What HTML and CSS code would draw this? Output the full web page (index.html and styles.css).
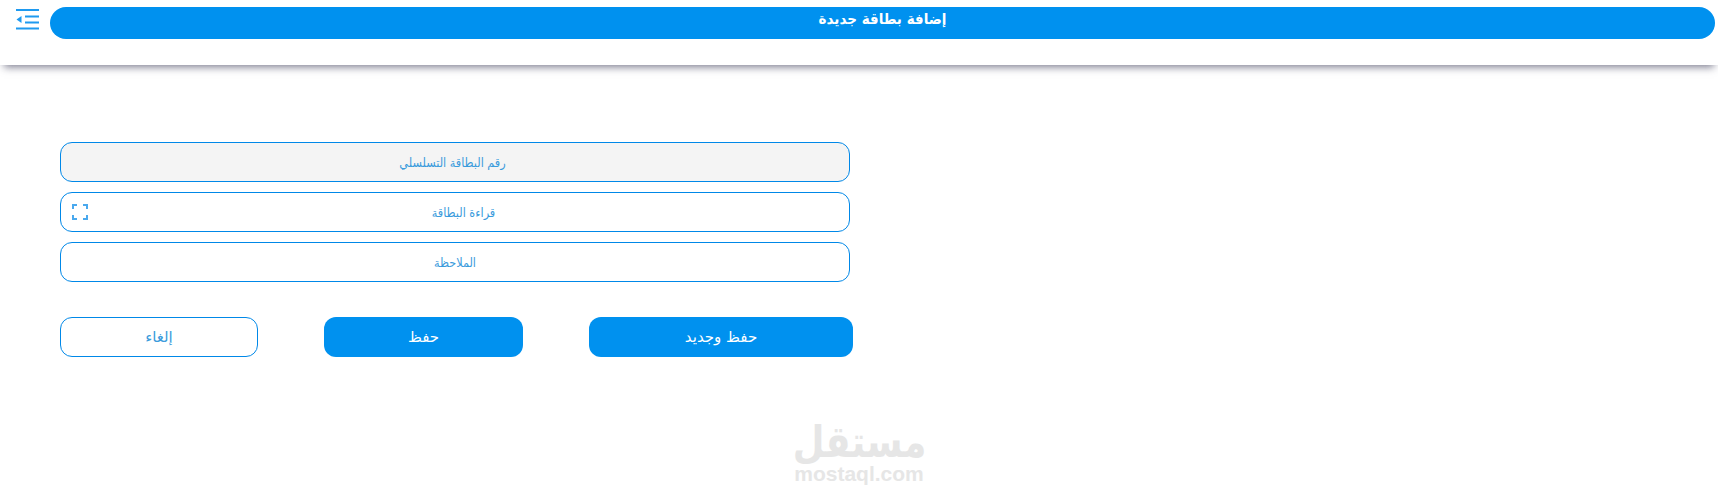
FILE: index.html
```html
<!DOCTYPE html>
<html lang="ar">
  <head>
    <meta charset="UTF-8" />
    <meta name="viewport" content="width=device-width, initial-scale=1.0" />
    <title>إضافة بطاقة جديدة</title>
    <link rel="stylesheet" href="styles.css">
  </head>
  <body>
    <header class="top-bar">
      <button class="menu-button" aria-label="menu">
        <svg width="24" height="21" viewBox="0 0 24 21">
          <path d="M0 1h23M9 7.500h14M9 13.500h14M0 19.500h23" fill="none" stroke="#1e9af0" stroke-width="2" />
          <path d="M0.500 10.500l5-3.500v7z" fill="#1e9af0" />
        </svg>
      </button>
      <h1 class="page-title" dir="rtl">إضافة بطاقة جديدة</h1>
    </header>

    <form class="card-form">
      <input class="field field-disabled" type="text" dir="rtl" placeholder="رقم البطاقة التسلسلي" />
      <div class="field-wrap">
        <input class="field field-scan" type="text" dir="rtl" placeholder="قراءة البطاقة" />
        <svg class="scan-icon" width="16" height="16" viewBox="0 0 16 16">
          <path d="M1 5V1h4M11 1h4v4M15 11v4h-4M5 15H1v-4" fill="none" stroke="#4aa9ee" stroke-width="2" />
        </svg>
      </div>
      <input class="field" type="text" dir="rtl" placeholder="الملاحظة" />

      <div class="actions">
        <button class="btn btn-outline" type="button">إلغاء</button>
        <button class="btn btn-primary btn-save" type="button">حفظ</button>
        <button class="btn btn-primary btn-save-new" type="button">حفظ وجديد</button>
      </div>
    </form>

    <footer class="watermark">
      <div class="watermark-ar" dir="rtl">مستقل</div>
      <div class="watermark-en">mostaql.com</div>
    </footer>
  </body>
</html>
```

FILE: styles.css
```css
html,
body {
  height: 496px;
  overflow: hidden;
}
body {
  margin: 0;
  background-color: #fff;
  font-family: "DejaVu Sans", sans-serif;
}
.top-bar {
  display: flex;
  align-items: flex-start;
  height: 65px;
  padding: 7px 3px 0 16px;
  box-sizing: border-box;
  background-color: #fff;
  box-shadow: 0 6px 8px -4px rgba(50, 50, 80, 0.65);
}
.menu-button {
  width: 24px;
  height: 21px;
  margin: 2px 10px 0 0;
  padding: 0;
  border: none;
  background: none;
}
.page-title {
  flex: 1;
  height: 32px;
  margin: 0;
  border-radius: 16px;
  background-color: #0091ef;
  color: #fff;
  font-family: "DejaVu Sans Condensed", "DejaVu Sans", sans-serif;
  font-size: 15px;
  font-weight: bold;
  line-height: 25px;
  text-align: center;
}
.card-form {
  display: flex;
  flex-direction: column;
  gap: 10px;
  width: 793px;
  margin: 77px 0 0 60px;
}
.field-wrap {
  position: relative;
}
.field {
  display: block;
  width: 790px;
  height: 40px;
  padding: 0;
  box-sizing: border-box;
  border: 1px solid #0088e8;
  border-radius: 12px;
  background-color: #fff;
  font-family: "DejaVu Sans Condensed", "DejaVu Sans", sans-serif;
  font-size: 12.500px;
  text-align: center;
}
.field::placeholder {
  color: #3a9bdc;
  opacity: 1;
}
.field-disabled {
  padding-right: 5px;
  background-color: #f4f4f4;
}
.field-scan {
  padding-left: 17px;
}
.scan-icon {
  position: absolute;
  left: 12px;
  top: 12px;
}
.actions {
  display: flex;
  margin-top: 25px;
}
.btn {
  height: 40px;
  padding: 0;
  box-sizing: border-box;
  border-radius: 12px;
  font-family: "DejaVu Sans", sans-serif;
  font-size: 15px;
}
.btn-outline {
  width: 198px;
  border: 1px solid #0088e8;
  background-color: #fff;
  color: #3a9bdc;
}
.btn-primary {
  border: none;
  background-color: #0091ef;
  color: #fff;
}
.btn-save {
  width: 199px;
  margin-left: 66px;
}
.btn-save-new {
  width: 264px;
  margin-left: 66px;
}
.watermark {
  display: flex;
  flex-direction: column;
  align-items: center;
  gap: 2px;
  margin-top: 65px;
  color: #e6e6e6;
}
.watermark-ar {
  font-size: 44px;
  font-weight: bold;
  line-height: 40px;
  transform: scaleX(0.83);
}
.watermark-en {
  font-family: "Liberation Sans", sans-serif;
  font-size: 21px;
  font-weight: bold;
  line-height: 20px;
}
```
